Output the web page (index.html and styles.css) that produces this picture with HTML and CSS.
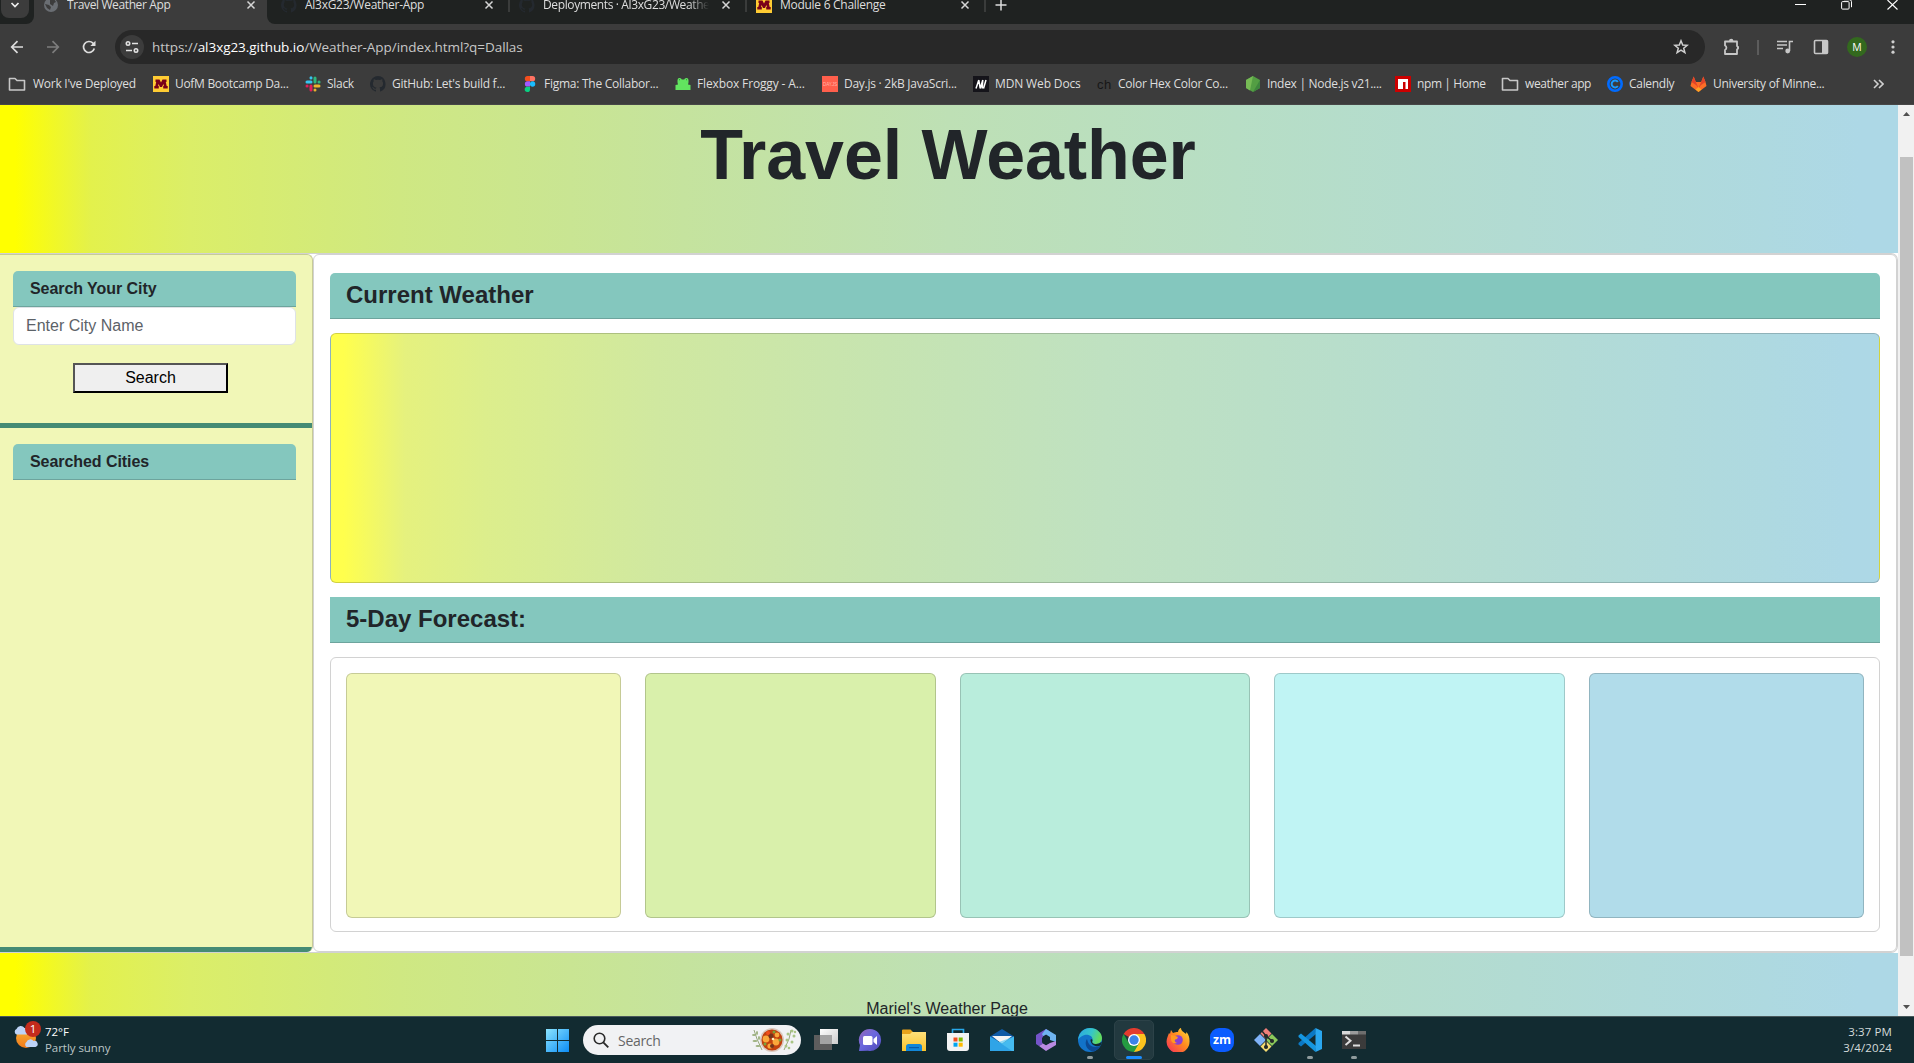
FILE: index.html
```html
<!DOCTYPE html>
<html lang="en">
<head>
<meta charset="utf-8">
<title>Travel Weather App</title>
<link rel="stylesheet" href="styles.css">
</head>
<body>
<svg class="defs" width="0" height="0" aria-hidden="true">
  <symbol id="octocat" viewBox="0 0 16 16"><path fill="#24292f" d="M8 0a8 8 0 0 0-2.5 15.6c.4.1.5-.2.5-.4v-1.5c-2.2.5-2.7-1-2.7-1-.4-.9-.9-1.200-.9-1.200-.7-.5.1-.5.1-.5.8.1 1.200.8 1.200.8.7 1.300 1.900.9 2.300.7.1-.5.3-.9.5-1.100-1.800-.2-3.600-.9-3.600-4 0-.9.3-1.600.8-2.100 0-.2-.3-1 .1-2.100 0 0 .7-.2 2.200.8a7.500 7.500 0 0 1 4 0c1.500-1 2.200-.8 2.200-.8.4 1.100.1 1.900.1 2.100.5.5.8 1.300.8 2.100 0 3.100-1.900 3.700-3.700 4 .3.2.6.7.6 1.400v2.200c0 .2.1.5.5.4A8 8 0 0 0 8 0z"/></symbol>
  <symbol id="umn" viewBox="0 0 16 16"><path fill="#ffcc33" d="M0 0h16v16H0z"/><path fill="#7a0019" d="M2.500 3.500h4L8 6.500l1.500-3h4V6h-.7l.9 4h1v2.500h-4.500V10h.7l-.5-2L9 11H7L5.600 8l-.5 2h.7v2.500H1.300V10h1l.9-4h-.7z"/></symbol>
  <symbol id="folder" viewBox="0 0 18 16"><path fill="none" stroke="#c7c7c7" stroke-width="1.600" stroke-linejoin="round" d="M1.500 2.500h5.500l2 2h7.500v9.500h-15z"/></symbol>
  <symbol id="x" viewBox="0 0 10 10"><path fill="none" stroke="#d5d5d5" stroke-width="1.500" d="M1.500 1.500l7 7M8.500 1.500l-7 7"/></symbol>
</svg>

<header class="browser">
  <div class="tabstrip">
    <div class="tabsearch-wrap"><div class="tabsearch"><svg width="10" height="8" viewBox="0 0 10 8"><path fill="none" stroke="#eee" stroke-width="1.700" d="M1.500 2l3.500 3.500L8.500 2"/></svg></div></div>
    <div class="tab active">
      <svg width="14" height="14" viewBox="0 0 14 14"><circle cx="7" cy="7" r="7" fill="#6a6e73"/><path fill="#3c3c3c" d="M1 6l4 1 2 2-1 3-3-2zM6 2l4-1 2 3-2 1-1 3-3-2z"/></svg>
      <span class="title">Travel Weather App</span><svg class="close" width="10" height="10"><use href="#x"/></svg>
    </div>
    <div class="tab"><svg width="16" height="16"><use href="#octocat"/></svg><span class="title loose">Al3xG23/Weather-App</span><svg class="close" width="10" height="10"><use href="#x"/></svg></div>
    <div class="tab sep"><svg width="16" height="16"><use href="#octocat"/></svg><span class="title fade">Deployments · Al3xG23/Weather-App</span><svg class="close" width="10" height="10"><use href="#x"/></svg></div>
    <div class="tab sep"><svg width="16" height="16"><use href="#umn"/></svg><span class="title loose">Module 6 Challenge</span><svg class="close" width="10" height="10"><use href="#x"/></svg></div>
    <div class="newtab"><svg width="12" height="12" viewBox="0 0 12 12"><path stroke="#ddd" stroke-width="1.500" d="M6 .5v11M.5 6h11"/></svg></div>
    <div class="winbtns">
      <svg width="11" height="11" viewBox="0 0 11 11"><path stroke="#fff" d="M0 4.500h11"/></svg>
      <svg width="11" height="11" viewBox="0 0 11 11"><rect x=".6" y="1.600" width="7.500" height="7.500" rx="1" fill="none" stroke="#fff"/><path fill="none" stroke="#fff" d="M3 -.3h5.500a2 2 0 0 1 2 2v5.500"/></svg>
      <svg width="11" height="11" viewBox="0 0 11 11"><path stroke="#fff" stroke-width="1.100" d="M.5 0l10 9.500M10.500 0l-10 9.500"/></svg>
    </div>
  </div>

  <div class="toolbar">
    <div class="nav">
      <svg width="14" height="14" viewBox="0 0 14 14"><path fill="none" stroke="#ddd" stroke-width="1.700" d="M13 7H2M7.500 1.200L1.700 7l5.800 5.800"/></svg>
      <svg width="14" height="14" viewBox="0 0 14 14"><path fill="none" stroke="#7d7d7d" stroke-width="1.700" d="M1 7h11M6.500 1.200L12.300 7l-5.800 5.800"/></svg>
      <svg width="14" height="14" viewBox="0 0 14 14"><path fill="none" stroke="#ddd" stroke-width="1.700" d="M12.300 8.500A5.500 5.500 0 1 1 11 3.200l1.300 1.500"/><path fill="#ddd" d="M13.500.8v5.200H8.300z"/></svg>
    </div>
    <div class="omnibox">
      <span class="chip"><svg width="14" height="14" viewBox="0 0 14 14"><g fill="none" stroke="#e3e3e3" stroke-width="1.600"><circle cx="3" cy="3.500" r="1.700"/><path d="M7 3.500h6M1 10.500h6"/><circle cx="11" cy="10.500" r="1.700"/></g></svg></span>
      <span class="url">https://<b>al3xg23.github.io</b>/Weather-App/index.html?q=Dallas</span>
      <svg class="star" width="16" height="16" viewBox="0 0 16 16"><path fill="none" stroke="#d0d0d0" stroke-width="1.500" stroke-linejoin="miter" d="M8 1.800l1.700 4.200 4.500.3-3.500 2.900 1.200 4.400L8 11.200l-3.900 2.400 1.200-4.400-3.500-2.900 4.500-.3z"/></svg>
    </div>
    <div class="actions">
      <svg width="18" height="18" viewBox="0 0 18 18"><path fill="none" stroke="#c7c7c7" stroke-width="1.800" stroke-linejoin="round" d="M2 3.500h12v4.500a2 2 0 0 1 0 3.500V16H2v-4a2.500 2.500 0 0 0 0-4.500z"/><path fill="#c7c7c7" d="M6 3a2.200 2.200 0 0 1 4.400 0zM14.500 7.800a2.100 2.100 0 0 1 0 4z"/></svg>
      <i class="rule"></i>
      <svg width="16" height="16" viewBox="0 0 16 16"><path fill="none" stroke="#c7c7c7" stroke-width="1.600" d="M0 2.500h10M0 6h10M0 9.500h6M12.500 12V2.500H16"/><circle cx="10.700" cy="12" r="2.400" fill="#c7c7c7"/></svg>
      <svg width="16" height="16" viewBox="0 0 16 16"><rect x="1.500" y="1.500" width="13" height="13" rx="1" fill="none" stroke="#c7c7c7" stroke-width="1.600"/><path fill="#c7c7c7" d="M9 1.500h5.500v13H9z"/></svg>
      <span class="avatar">M</span>
      <svg width="4" height="14" viewBox="0 0 4 14"><g fill="#d0d0d0"><circle cx="2" cy="1.800" r="1.600"/><circle cx="2" cy="7" r="1.600"/><circle cx="2" cy="12.200" r="1.600"/></g></svg>
    </div>
  </div>

  <nav class="bookmarks">
    <a class="loose"><svg width="18" height="16"><use href="#folder"/></svg>Work I've Deployed</a>
    <a><svg width="16" height="16"><use href="#umn"/></svg>UofM Bootcamp Da...</a>
    <a><svg width="16" height="16" viewBox="0 0 16 16"><g stroke-width="3" stroke-linecap="round"><path stroke="#36c5f0" d="M2 6h4M6 1.800v.3"/><path stroke="#2eb67d" d="M10 2v4M14 6h.1"/><path stroke="#ecb22e" d="M10 10h4M10 14v.1"/><path stroke="#e01e5a" d="M6 10v4M2 10h.1"/></g></svg>Slack</a>
    <a class="loose"><svg width="16" height="16"><use href="#octocat"/></svg>GitHub: Let's build f...</a>
    <a class="loose"><svg width="16" height="16" viewBox="0 0 16 16"><path fill="#f24e1e" d="M8 0v5.300H5.500a2.650 2.650 0 0 1 0-5.300z"/><path fill="#ff7262" d="M8 0h2.500a2.650 2.650 0 0 1 0 5.300H8z"/><path fill="#a259ff" d="M8 5.300v5.300H5.500a2.650 2.650 0 0 1 0-5.300z"/><circle cx="10.600" cy="8" r="2.650" fill="#1abcfe"/><path fill="#0acf83" d="M8 10.700v2.600a2.650 2.650 0 1 1-2.600-2.600z"/></svg>Figma: The Collabor...</a>
    <a class="looser"><svg width="16" height="16" viewBox="0 0 16 16"><path fill="#62e45f" d="M2.500 5.500V4a2.200 2.200 0 0 1 4.300-.5h2.400A2.200 2.200 0 0 1 13.500 4v2.500l-.5 2 2.500.5v5h-15V9l2.500-.5-.5-2z"/><path fill="#2b8a35" d="M4 3.300h1v1H4zM11 3.300h1v1h-1z"/></svg>Flexbox Froggy - A...</a>
    <a class="loose"><svg width="16" height="16" viewBox="0 0 16 16"><path fill="#ff5f4c" d="M0 0h16v16H0z"/><text x="1" y="9.500" font-size="4.500" fill="#ffb4a8" font-family="Liberation Sans" textLength="14">DAY.JS</text></svg>Day.js · 2kB JavaScri...</a>
    <a class="looser"><svg width="16" height="16" viewBox="0 0 16 16"><path fill="#15141a" d="M0 0h16v16H0z"/><path fill="none" stroke="#fff" stroke-width="1.500" d="M3 12.500L5.800 4M5.800 4L7.200 12.500M7.200 12.500L9.800 4M9.800 4l-.6 8.500M10.500 12.500L13 4"/></svg>MDN Web Docs</a>
    <a class="loose"><svg width="16" height="16" viewBox="0 0 16 16"><text x="1" y="13" font-size="13" fill="#171717" font-family="Liberation Sans" textLength="14">ch</text></svg>Color Hex Color Co...</a>
    <a><svg width="16" height="16" viewBox="0 0 16 16"><path fill="#539e43" d="M8 0l7 4v8l-7 4-7-4V4z"/><path fill="#76bb55" d="M8 0L1 4v8l4 2.500z"/><path fill="#3e863d" d="M15 4v8l-7 4z"/></svg>Index | Node.js v21....</a>
    <a class="tight"><svg width="16" height="16" viewBox="0 0 16 16"><path fill="#cb0000" d="M0 0h16v16H0z"/><path fill="#fff" d="M3 3h10v10h-2.500V6H8v7H3z"/></svg>npm | Home</a>
    <a class="tight"><svg width="18" height="16"><use href="#folder"/></svg>weather app</a>
    <a><svg width="16" height="16" viewBox="0 0 16 16"><circle cx="8" cy="8" r="6.700" fill="none" stroke="#006bff" stroke-width="2.600"/><path fill="none" stroke="#1a9bff" stroke-width="2" d="M10.800 6a3.400 3.400 0 1 0 0 4"/></svg>Calendly</a>
    <a><svg width="17" height="16" viewBox="0 0 16 16"><path fill="#fc6d26" d="M1 6l2.200-5.500L5.300 6h5.400l2.100-5.500L15 6l1 4-8 6-8-6z"/><path fill="#e24329" d="M3.200.5L5.300 6 8 12l2.700-6 2.100-5.500L15 6l-4.500 3L8 12 5.500 9 1 6z"/><path fill="#fca326" d="M8 11l3 2.500L8 16l-3-2.500z"/></svg>University of Minne...</a>
    <a class="more"><svg width="11" height="10" viewBox="0 0 11 10"><path fill="none" stroke="#d0d0d0" stroke-width="1.600" d="M1 1l4 4-4 4M6 1l4 4-4 4"/></svg></a>
  </nav>
</header>

<div class="viewport">
  <div class="page">
    <header class="hero"><h1>Travel Weather</h1></header>
    <main class="board">
      <aside class="sidebar">
        <section class="search">
          <h5 class="bar">Search Your City</h5>
          <input class="field" type="text" placeholder="Enter City Name">
          <button class="go" type="button">Search</button>
        </section>
        <section class="history"><h5 class="bar">Searched Cities</h5></section>
      </aside>
      <section class="content">
        <h3 class="bar big rounded">Current Weather</h3>
        <div class="current"></div>
        <h3 class="bar big">5-Day Forecast:</h3>
        <div class="forecast">
          <div class="day d1"></div><div class="day d2"></div><div class="day d3"></div><div class="day d4"></div><div class="day d5"></div>
        </div>
      </section>
    </main>
    <footer class="foot">Mariel's Weather Page</footer>
  </div>
  <div class="scroll">
    <svg width="7" height="4" viewBox="0 0 7 4"><path fill="#505050" d="M3.500 0L7 4H0z"/></svg>
    <div class="track"><div class="thumb"></div></div>
    <svg width="7" height="4" viewBox="0 0 7 4"><path fill="#505050" d="M3.500 4L0 0h7z"/></svg>
  </div>
</div>

<footer class="taskbar">
  <div class="widget">
    <svg width="28" height="30" viewBox="0 0 28 30"><defs><linearGradient id="sun" x2="0" y2="1"><stop stop-color="#f9b233"/><stop offset="1" stop-color="#f07a1c"/></linearGradient></defs><circle cx="12" cy="18" r="10" fill="url(#sun)"/><path fill="#bdd3f7" d="M2.500 14.500a3 3 0 0 1 0-5.500 4.500 4.500 0 0 1 8-1 3.500 3.500 0 0 1 2 6.500zM12.500 27a3 3 0 0 1 0-5 4 4 0 0 1 7-1 3 3 0 0 1 2 6z"/><circle cx="19" cy="9" r="8" fill="#c42b1c"/><text x="19" y="13" text-anchor="middle" font-family="Open Sans" font-size="11.500" fill="#fff">1</text></svg>
    <div class="temp"><strong>72°F</strong><span>Partly sunny</span></div>
  </div>
  <div class="dock">
    <svg class="start" width="24" height="24" viewBox="0 0 24 24"><defs><linearGradient id="win" x2="1" y2="1"><stop stop-color="#8be4ff"/><stop offset="1" stop-color="#0c8cf5"/></linearGradient></defs><path fill="url(#win)" d="M1 1h11v11H1zM13 1h11v11H13zM1 13h11v11H1zM13 13h11v11H13z"/></svg>
    <div class="find">
      <svg width="16" height="16" viewBox="0 0 16 16"><circle cx="6.500" cy="6.500" r="5.300" fill="none" stroke="#2b2b2b" stroke-width="1.600"/><path stroke="#2b2b2b" stroke-width="1.900" d="M10.300 10.300l5 5"/></svg>
      <span>Search</span>
      <svg class="soup" width="46" height="26" viewBox="0 0 46 26"><g fill="none" stroke="#96a77b" stroke-width="1"><path d="M3 3l3 9 5 11M40 3l-2 9-5 11"/></g><g fill="#9cb07e"><ellipse cx="3" cy="8" rx="2" ry="1"/><ellipse cx="6" cy="6" rx="1" ry="2"/><ellipse cx="4" cy="14" rx="2.500" ry="1"/><ellipse cx="8" cy="11" rx="1" ry="2"/><ellipse cx="7" cy="19" rx="2.500" ry="1"/></g><g fill="#a9c585"><circle cx="41" cy="4" r="1.500"/><circle cx="37" cy="7" r="1.500"/><circle cx="43" cy="9" r="1.500"/><circle cx="36" cy="13" r="1.500"/><circle cx="41" cy="15" r="1.500"/><circle cx="44" cy="5" r="1.200"/><circle cx="35" cy="19" r="1.500"/><circle cx="38" cy="21" r="1.300"/></g><circle cx="21" cy="13" r="12" fill="#d9c8bd"/><circle cx="21" cy="13" r="10.500" fill="#c2410f"/><g fill="#f9a83c"><circle cx="15" cy="12" r="3.400"/><circle cx="25" cy="15" r="3.400"/><circle cx="19" cy="19" r="2.600"/><circle cx="26" cy="8" r="2.400"/></g><g fill="#73351d"><circle cx="21" cy="19" r="2"/><circle cx="20" cy="9" r="2.500"/></g><g fill="#79a33a"><circle cx="23" cy="5" r="1.500"/><circle cx="29" cy="13" r="1.500"/><circle cx="14" cy="17" r="1.500"/></g><circle cx="17" cy="6" r="2" fill="#f04e1c"/><circle cx="22" cy="12" r="1.300" fill="#fff0c2"/></svg>
    </div>
    <div class="app"><svg width="24" height="24" viewBox="0 0 24 24"><defs><linearGradient id="tv" x2="1" y2="1"><stop stop-color="#fff"/><stop offset="1" stop-color="#ccc"/></linearGradient></defs><path fill="#5d5d5d" d="M0 7h18v15H0z"/><path fill="url(#tv)" d="M6 1h18v15H6z"/><path fill="#a4a4a4" d="M6 7h12v9H6z"/></svg></div>
    <div class="app"><svg width="24" height="24" viewBox="0 0 24 24"><defs><linearGradient id="ch" x1="0" y1="0" x2="1" y2="1"><stop stop-color="#9566b4"/><stop offset=".45" stop-color="#6b68df"/><stop offset="1" stop-color="#4e4ab5"/></linearGradient></defs><path fill="url(#ch)" d="M12 1a11 11 0 1 1-2 21.800L1 23l1-6A11 11 0 0 1 12 1z"/><rect x="5" y="8" width="9.500" height="9" rx="1.500" fill="#fff"/><path fill="#fff" d="M15.500 11l3.500-3v9l-3.500-3z"/></svg></div>
    <div class="app"><svg width="24" height="24" viewBox="0 0 24 24"><path fill="#e8a21b" d="M0 2.500a1 1 0 0 1 1-1h7.500L11 4v4H0z"/><defs><linearGradient id="fo" x2="0" y2="1"><stop stop-color="#ffe07a"/><stop offset="1" stop-color="#fcc42b"/></linearGradient></defs><path fill="url(#fo)" d="M0 6h8l2-2h14v19H0z"/><path fill="#1287d9" d="M4 23v-4.500A2.500 2.500 0 0 1 6.500 16h11a2.500 2.500 0 0 1 2.500 2.500V23z"/><path fill="#0a5ba8" d="M7 19h10v1.200H7z"/></svg></div>
    <div class="app"><svg width="24" height="24" viewBox="0 0 24 24"><path fill="none" stroke="#28a8ea" stroke-width="1.600" d="M6.500 6V1.500h11V6"/><path fill="#f3f3f3" d="M1 5h22v15a3 3 0 0 1-3 3H4a3 3 0 0 1-3-3z"/><path fill="#f25022" d="M7.500 9.500h4v4h-4z"/><path fill="#7fba00" d="M12.700 9.500h4v4h-4z"/><path fill="#00a4ef" d="M7.500 14.700h4v4h-4z"/><path fill="#ffb900" d="M12.700 14.700h4v4h-4z"/></svg></div>
    <div class="app"><svg width="24" height="24" viewBox="0 0 24 24"><path fill="#0f5aa6" d="M0 8.500L12 1l12 7.500V13H0z"/><path fill="#f4f4f4" d="M2 8h20l-10 8z"/><path fill="#2fa4e7" d="M0 8.500l12 7L24 8.500V23H0z"/><path fill="#52c7f5" d="M24 8.500V23H22L9 14z" opacity=".65"/></svg></div>
    <div class="app"><svg width="24" height="24" viewBox="0 0 24 24"><path fill="#7454c9" d="M12 1l4 2.500-7 5v7L5 18l-3-2V7z"/><path fill="#6fb4f0" d="M12 1l10 6v7l-6-2V9l-4-2.500L9 8l-1-2z"/><path fill="#b98ae2" d="M22 13v4l-10 6-7-5 4-2.500 3 1.800 4-2.300z"/><path fill="#122b31" d="M12 7.500l4 2.300v4.700l-4 2.300-4-2.300V9.800z"/></svg></div>
    <div class="app run"><svg width="24" height="24" viewBox="0 0 24 24"><defs><linearGradient id="ed" x2="1" y2=".3"><stop stop-color="#2aa5e3"/><stop offset=".6" stop-color="#36c6c9"/><stop offset="1" stop-color="#62db5f"/></linearGradient></defs><circle cx="12" cy="12" r="12" fill="#1273c9"/><path fill="url(#ed)" d="M0 12C1 4 6 0 12 0c7 0 12 5 12 10 0 4-3 6-6.500 6-3 0-4-1-3-3 1-5-4-7-8-6C3 8 1 10 0 12z"/><path fill="#0c4a94" d="M9 11c-3 4-1 11 6 12.500 3-.5 6-3 7.500-6-4 2.500-9 2-11.500-1.500-1-1.500-1.500-3.500-2-5z"/><path fill="#122b31" d="M12.500 12c0-1 2-1.500 2 .5-1 2 .5 3.500 3.500 3.500 2 0 4-.7 5.300-2l.5.500-1.300 3c-4 2-9.500 0-10-5.500z"/></svg></div>
    <div class="app on"><svg width="24" height="24" viewBox="0 0 24 24"><path fill="#e33b2e" d="M12 12L1.600 6a12 12 0 0 1 20.800 0z"/><path fill="#fcc31e" d="M12 12V6h10.400A12 12 0 0 1 12 24z"/><path fill="#249a41" d="M12 12l5.200 3L12 24A12 12 0 0 1 1.600 6l5.200 9z"/><circle cx="12" cy="12" r="6" fill="#fff"/><circle cx="12" cy="12" r="4.700" fill="#3b82e8"/></svg></div>
    <div class="app"><svg width="24" height="24" viewBox="0 0 24 24"><defs><linearGradient id="ff" x1="1" y1="0" x2="0" y2="1"><stop stop-color="#ffe13c"/><stop offset=".45" stop-color="#ff8a1f"/><stop offset="1" stop-color="#f5285f"/></linearGradient></defs><path fill="url(#ff)" d="M5 2l2 3c2-1 3-1 5-1 0-2 2-4 3-4 0 3 3 4 5 6l.5-2C23 7 23.500 10 23.500 12.500A11.500 11.500 0 1 1 1.500 9L3 5l1 1z"/><circle cx="12" cy="12" r="4.800" fill="#8b3fd0"/><path fill="#ff9a20" d="M5 7c3 0 4 1 7 2l-1 2c-3 0-3 3 0 4-4 1-6-1-6-4z"/></svg></div>
    <div class="app"><svg width="24" height="24" viewBox="0 0 24 24"><rect width="24" height="24" rx="9" fill="#0b5cff"/><text x="3" y="15.800" font-family="Open Sans" font-weight="700" font-size="13" fill="#fff" textLength="18" lengthAdjust="spacingAndGlyphs">zm</text></svg></div>
    <div class="app"><svg width="24" height="24" viewBox="0 0 24 24"><path fill="#f07f7a" d="M12 0l5.500 5.500L12 11 6.500 5.500z"/><path fill="#7fb2f7" d="M6 6l6 6-6 6-6-6z"/><path fill="#8ac95a" d="M18 6l6 6-6 6-6-6z"/><path fill="#f5dc72" d="M12 13l5.500 5.500L12 24l-5.500-5.500z"/><g stroke="#252b2b" stroke-width="1.500" fill="#252b2b"><path fill="none" d="M8 3l4 5v11M12 8l6 5"/><circle cx="12" cy="8" r="1.300"/><circle cx="18" cy="13" r="1.300"/><circle cx="12" cy="19" r="1.300"/></g></svg></div>
    <div class="app run"><svg width="24" height="24" viewBox="0 0 24 24"><path fill="#0b78c4" d="M17.500 0l.5 6L3 18.500.5 16.500v-1.500z"/><path fill="#1596e0" d="M.5 7.500L3 5.500 18 18l-.5 6L.5 9z"/><path fill="#2aa7f0" d="M17.500 0L24 3v18l-6.500 3z"/></svg></div>
    <div class="app run"><svg width="24" height="24" viewBox="0 0 24 24"><path fill="#3b3b3b" d="M0 3h24v18H0z"/><path fill="#d8d8d8" d="M0 3h8v3.500H0z"/><path fill="#9b9b9b" d="M8 3h8v3.500H8z"/><path fill="#6e6e6e" d="M16 3h8v3.500h-8z"/><path fill="none" stroke="#dedede" stroke-width="2" d="M3.500 8.500l5 4.300-5 4.300M11 17.500h7"/></svg></div>
  </div>
  <div class="clock"><span>3:37 PM</span><span>3/4/2024</span></div>
</footer>
</body>
</html>
```
FILE: styles.css
```css
*{box-sizing:border-box}
body{margin:0;width:1914px;height:1063px;overflow:hidden;display:flex;flex-direction:column;font-family:"Liberation Sans",Arial,sans-serif;color:#212529;background:#fff}
svg{display:block;flex:none}
.defs{position:absolute}

/* Browser chrome */
.browser{height:105px;flex:none;background:#3c3c3c;font-family:"Open Sans","Noto Sans",sans-serif;font-size:12px;color:#dedede;overflow:hidden;border-bottom:1px solid #474747}
.tabstrip{height:24px;background:linear-gradient(90deg,#3c3c3c 290px,#1f2221 290px);display:grid;grid-template-columns:34px 233px 241px 237px 239px 34px 1fr;line-height:16px}
.tabsearch-wrap{background:#1f2221;border-bottom-right-radius:8px;height:24px;padding-left:1px}
.tabsearch{width:28px;height:18px;background:#3c3c3c;border-radius:0 0 8px 8px;display:flex;justify-content:center;padding-top:1px}
.tab{display:flex;align-items:center;height:24px;padding:0 14px 14px;white-space:nowrap}
.tab .title{margin-left:8px;flex:1;overflow:hidden;letter-spacing:-.38px}
.tab .title.loose{letter-spacing:-.28px}
.tab .close{margin-left:12px}
.tab.active{background:#3c3c3c;padding:0 11px 14px 10px}
.tab.active .title{margin-left:9px}
.tabstrip .tab.active + .tab{border-bottom-left-radius:8px;background:#1f2221}
.tab.sep{border-left:2px solid;border-image:linear-gradient(#3a3c3b 12px,#1f2221 12px) 1;padding-left:9px}
.fade{-webkit-mask-image:linear-gradient(90deg,#000 88%,transparent)}
.newtab{padding:0 0 0 9px;border-left:2px solid;border-image:linear-gradient(#3a3c3b 12px,#1f2221 12px) 1}
.newtab svg{margin-top:-1px}
.winbtns{display:flex;justify-content:flex-end;gap:35px;padding-right:16px}
.toolbar{height:46px;display:flex;align-items:center}
.nav{width:115px;display:flex;gap:22px;padding-left:10px}
.omnibox{width:1590px;height:34px;border-radius:17px;background:#282828;display:flex;align-items:center;padding:0 16px 0 5px}
.chip{width:24px;height:24px;border-radius:50%;background:#3c3c3c;display:grid;place-items:center}
.url{margin-left:8px;font-size:13.5px;letter-spacing:-.05px;color:#c7c7c7;flex:1}
.url b{font-weight:400;color:#fff}
.actions{display:flex;align-items:center;margin-left:18px}
.rule{width:2px;height:15px;background:#5c5c5c;margin:0 18px 0 16px}
.actions svg:nth-of-type(3){margin-left:20px}
.avatar{width:20px;height:20px;border-radius:50%;background:#33691e;color:#fff;font-size:10.5px;line-height:20px;text-align:center;margin:0 24px 0 18px}
.bookmarks{height:27px;display:grid;grid-template-columns:145px 152px 65px 152px 153px 147px 151px 123px 149px 150px 106px 106px 83px 183px 1fr;padding-left:8px}
.bookmarks a{display:flex;align-items:center;gap:6px;white-space:nowrap;letter-spacing:-.3px}
.bookmarks a.loose{letter-spacing:-.26px}
.bookmarks a.looser{letter-spacing:-.14px}
.bookmarks a.tight{letter-spacing:-.4px}
.bookmarks a:first-child{gap:7px}

/* Page */
.viewport{height:911px;flex:none;display:flex;overflow:hidden}
.page{width:1898px;height:911px;overflow:hidden}
.hero,.foot{background:linear-gradient(90deg,#ff0 0,#ff0 .8%,#e3f14c 4.800%,#dbee68 10%,#cfe882 21%,#c5e39e 36%,#bee0b5 50%,#b7dec5 65%,#b2dbd3 80%,#aed9e0 93%,#add8e6 98%)}
.hero{height:148px;text-align:center;overflow:hidden}
.hero h1{margin:8px 0 0 -2px;font-size:70px;line-height:84px;letter-spacing:-.1px}
.board{height:700px;display:grid;grid-template-columns:313px 1fr;border:solid #d2d2d2;border-width:1px 1px 1px 0;border-radius:0 7px 7px 0}
.sidebar{display:flex;flex-direction:column;background:#f1f7b7;border:solid #c7cb97;border-width:1px 1px 0 0;border-radius:0 6px 6px 0;overflow:hidden}
.search{height:173px;padding:16px 16px 0 13px;border-bottom:5px solid #458b74}
.history{flex:1;padding:16px 16px 0 13px;border-bottom:5px solid #458b74}
.bar{margin:0;height:36px;padding:0 17px;line-height:35px;font-size:16px;font-weight:700;letter-spacing:-.06px;background:#84c7be;border-bottom:1px solid #6da49d;border-radius:5px 5px 0 0}
.field{display:block;width:283px;height:38px;padding:0 12px;border:1px solid #dee2e6;border-radius:6px;background:#fff;font:16px "Liberation Sans",Arial,sans-serif;color:#212529}
.field::placeholder{color:#5c6268;opacity:1}
.go{display:block;width:155px;height:30px;margin:18px 0 0 60px;padding:0;background:#efefef;border:2px solid;border-color:#555 #000 #000 #555;font:16px "Liberation Sans",Arial,sans-serif;color:#000}
.content{border:1px solid #d2d2d2;border-radius:6px;padding:18px 16px 0;display:flex;flex-direction:column}
.bar.big{height:46px;font-size:24px;line-height:44px;padding:0 16px;border-radius:0;flex:none;letter-spacing:0}
.bar.big.rounded{border-radius:5px 5px 0 0}
.current{height:250px;margin:14px 0;border:1px solid rgba(0,0,0,.175);border-radius:6px;background:linear-gradient(90deg,#ffff4d 0,#ffff4d .8%,#e5f17e 4.800%,#dcee8c 10%,#d0e8a0 21%,#c6e4b1 36%,#bfe1c1 50%,#b8decb 65%,#b2dbd6 80%,#aed9e1 93%,#add8e6 98%)}
.forecast{height:275px;padding:15px 15px 13px;border:1px solid #d2d2d2;border-radius:6px;display:grid;grid-template-columns:275px 1fr 1fr 1fr 275px;column-gap:24px;margin-top:14px}
.day{height:245px;border:1px solid rgba(0,0,0,.175);border-radius:6px}
.d1{background:#f1f7b7}
.d2{background:#d9f0ab}
.d3{background:#b9eddc}
.d4{background:#c0f4f4}
.d5{background:#b1dcea}
.foot{height:63px;padding-top:46px;text-align:center;font-size:16px;line-height:19px;text-indent:-4px;letter-spacing:.03px}
.scroll{width:16px;background:#f1f1f1;display:flex;flex-direction:column;align-items:center;padding:7px 0}
.track{flex:1;padding:41px 1px 0 2px;align-self:stretch}
.thumb{height:799px;background:#c1c1c1}

/* Taskbar */
.taskbar{height:47px;flex:none;background:#122b31;border-top:1px solid #48585b;display:flex;align-items:center;font-family:"Open Sans","Noto Sans",sans-serif;color:#fff}
.widget{width:545px;display:flex;gap:3px;padding-left:14px}
.widget svg{margin-top:-4px}
.temp{display:flex;flex-direction:column;font-size:11.5px;line-height:16px;letter-spacing:-.05px}
.temp strong{font-weight:500}
.temp span{color:#bcc5c6}
.dock{display:flex;align-items:center}
.find{width:218px;height:30px;margin:0 3px 0 14px;border-radius:15px;background:#f1f2f4;color:#666;font-size:14px;letter-spacing:-.3px;display:flex;align-items:center;padding:0 4px 0 10px}
.find span{margin-left:9px;flex:1}
.app{width:40px;height:40px;margin:0 2px;border-radius:5px;display:flex;flex-direction:column;align-items:center;padding-top:8px}
.app.run::after,.app.on::after{content:"";width:6px;height:3px;margin-top:4px;border-radius:2px;background:#8f9b9d;flex:none}
.app.on{background:#22393f;border:1px solid #2c4248;padding-top:7px}
.app.on::after{width:16px;background:#1a8cff}
.clock{margin-left:auto;padding-right:22px;display:flex;flex-direction:column;text-align:right;font-size:11.5px;line-height:16px;color:#d5dbdb;letter-spacing:.1px}
```
